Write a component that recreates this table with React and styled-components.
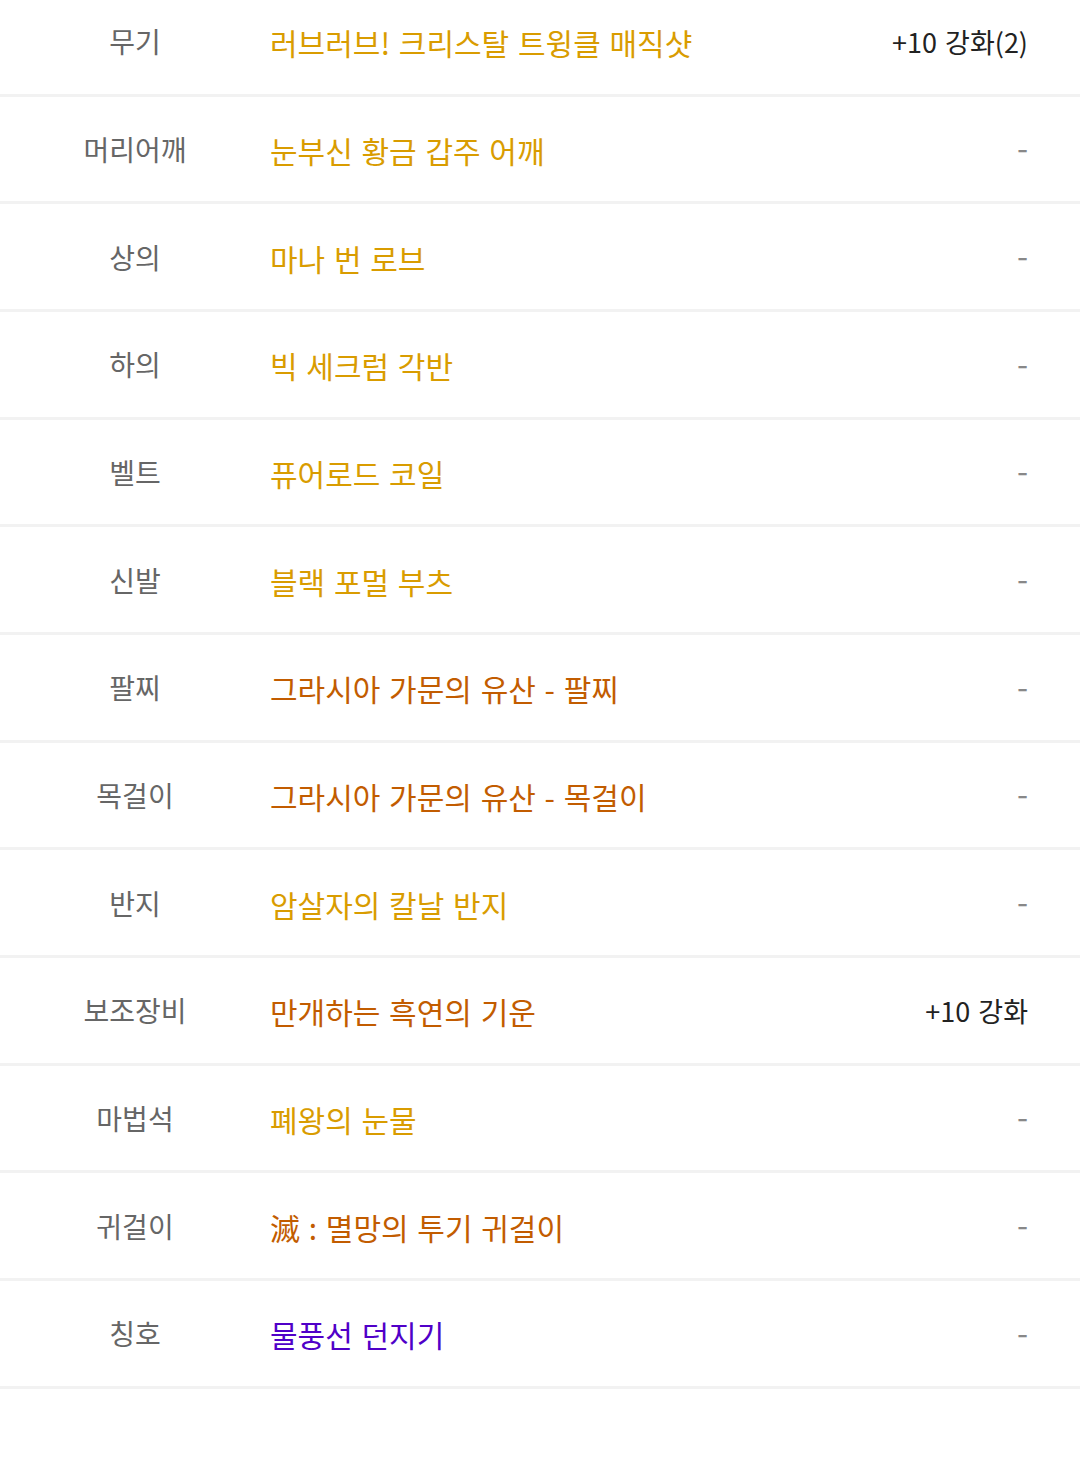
import React from "react";
import styled, { createGlobalStyle } from "styled-components";

const GlobalStyle = createGlobalStyle`
  body {
    margin: 0;
    background: #fff;
    font-family: "Noto Sans CJK KR", "Noto Sans", sans-serif;
  }
`

const List = styled.div`
  width: 1080px;
  margin-top: -11px;
  display: flex;
  flex-direction: column;
`

const Row = styled.div`
  height: 104.67px;
  border-bottom: 3px solid #f2f2f2;
  display: grid;
  grid-template-columns: 270px 1fr auto;
  align-items: center;
  padding-right: 52px;
`

const Label = styled.div`
  text-align: center;
  font-size: 28px;
  color: #666;
`

const Name = styled.div`
  font-size: 30px;
  word-spacing: 2px;
  color: ${(p) => p.color};
  padding-top: 2px;
`

const Extra = styled.div`
  font-size: ${(p) => (p.empty ? "32px" : "27px")};
  color: ${(p) => (p.empty ? "#888" : "#222")};
  padding-bottom: ${(p) => (p.empty ? "5px" : "0")};
  word-spacing: 2px;
`

const GOLD = "#d99c00"
const ORANGE = "#c25c00"
const PURPLE = "#5000c8"

const items = [
  { slot: "무기", name: "러브러브! 크리스탈 트윙클 매직샷", color: GOLD, extra: "+10 강화(2)" },
  { slot: "머리어깨", name: "눈부신 황금 갑주 어깨", color: GOLD },
  { slot: "상의", name: "마나 번 로브", color: GOLD },
  { slot: "하의", name: "빅 세크럼 각반", color: GOLD },
  { slot: "벨트", name: "퓨어로드 코일", color: GOLD },
  { slot: "신발", name: "블랙 포멀 부츠", color: GOLD },
  { slot: "팔찌", name: "그라시아 가문의 유산 - 팔찌", color: ORANGE },
  { slot: "목걸이", name: "그라시아 가문의 유산 - 목걸이", color: ORANGE },
  { slot: "반지", name: "암살자의 칼날 반지", color: GOLD },
  { slot: "보조장비", name: "만개하는 흑연의 기운", color: ORANGE, extra: "+10 강화" },
  { slot: "마법석", name: "폐왕의 눈물", color: GOLD },
  { slot: "귀걸이", name: "滅 : 멸망의 투기 귀걸이", color: ORANGE },
  { slot: "칭호", name: "물풍선 던지기", color: PURPLE },
]

function App() {
  return (
    <>
      <GlobalStyle />
      <List>
        {items.map((it) => (
          <Row key={it.slot}>
            <Label>{it.slot}</Label>
            <Name color={it.color}>{it.name}</Name>
            <Extra empty={!it.extra}>{it.extra || "-"}</Extra>
          </Row>
        ))}
      </List>
    </>
  );
}

export default App;
